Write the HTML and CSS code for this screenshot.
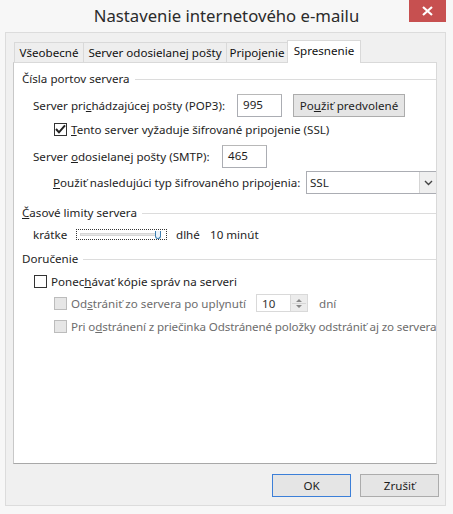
FILE: index.html
```html
<!DOCTYPE html>
<html lang="sk">
<head>
  <meta charset="UTF-8">
  <title>Nastavenie internetového e-mailu</title>
  <link rel="stylesheet" href="styles.css">
</head>
<body>
  <div class="window">
    <!-- Title bar -->
    <div class="titlebar">
      <span class="title">Nastavenie internetového e-mailu</span>
      <div class="close">
        <svg width="11" height="10" viewBox="0 0 11 10"><path d="M1 1 L10 9 M10 1 L1 9" stroke="#fff" stroke-width="2.2"/></svg>
      </div>
    </div>

    <div class="dialog">
      <!-- Tabs -->
      <div class="tabs">
        <div class="tab t1">Všeobecné</div>
        <div class="tab t2">Server odosielanej pošty</div>
        <div class="tab t3">Pripojenie</div>
        <div class="tab t4 active">Spresnenie</div>
      </div>

      <div class="panel">
        <div class="group-head"><span>Čísla portov servera</span><i></i></div>

        <div class="row row-pop">
          <label class="lbl w-pop">Server pri<u>c</u>hádzajúcej pošty (POP3):</label>
          <div class="field w45">995</div>
          <button class="btn btn-default">Po<u>u</u>žiť predvolené</button>
        </div>

        <div class="row row-ssl">
          <span class="check checked">
            <svg width="11" height="10" viewBox="0 0 11 10"><path d="M1 5 L4 8.3 L10 1.3" fill="none" stroke="#222" stroke-width="2"/></svg>
          </span>
          <span class="lbl"><u>T</u>ento server vyžaduje šifrované pripojenie (SSL)</span>
        </div>

        <div class="row row-smtp">
          <label class="lbl w-smtp">Server <u>o</u>dosielanej pošty (SMTP):</label>
          <div class="field w45">465</div>
        </div>

        <div class="row row-enc">
          <label class="lbl w-enc"><u>P</u>oužiť nasledujúci typ šifrovaného pripojenia:</label>
          <div class="select">
            <span class="select-val">SSL</span>
            <span class="select-arrow">
              <svg width="9" height="6" viewBox="0 0 9 6"><path d="M1 1 L4.5 4.5 L8 1" fill="none" stroke="#444" stroke-width="1.4"/></svg>
            </span>
          </div>
        </div>

        <div class="group-head gh-time"><span><u>Č</u>asové limity servera</span><i></i></div>

        <div class="row row-slider">
          <span class="lbl w-short">krátke</span>
          <div class="slider">
            <div class="track"></div>
            <div class="thumb"></div>
          </div>
          <span class="lbl w-long">dlhé</span>
          <span class="lbl">10 minút</span>
        </div>

        <div class="group-head gh-deliv"><span>Doručenie</span><i></i></div>

        <div class="row row-keep">
          <span class="check"></span>
          <span class="lbl">Ponec<u>h</u>ávať kópie správ na serveri</span>
        </div>

        <div class="row row-remove">
          <span class="check disabled"></span>
          <span class="lbl dim w-remove">Od<u>s</u>trániť zo servera po uplynutí</span>
          <div class="spin">
            <span class="spin-val">10</span>
            <span class="spin-btns">
              <svg width="14" height="15" viewBox="0 0 14 15"><path d="M4 6 L7 3 L10 6 Z M4 9 L7 12 L10 9 Z" fill="#888"/><path d="M0 7.5 H14" stroke="#d6d6d6"/></svg>
            </span>
          </div>
          <span class="lbl dim days">dní</span>
        </div>

        <div class="row row-deleted">
          <span class="check disabled"></span>
          <span class="lbl dim tight">Pri o<u>d</u>stránení z priečinka Odstránené položky odstrániť aj zo servera</span>
        </div>
      </div>

      <!-- Dialog buttons -->
      <div class="actions">
        <button class="btn btn-ok">OK</button>
        <button class="btn btn-cancel">Zrušiť</button>
      </div>
    </div>
  </div>
</body>
</html>
```

FILE: styles.css
```css
body {
  margin: 0;
  padding: 0;
  font-family: "Noto Sans", "Open Sans", sans-serif;
  font-size: 11.6px;
  color: #1e1e1e;
  background-color: #f7f7f7;
}
.window {
  width: 453px;
  height: 514px;
  position: relative;
  background-color: #f7f7f7;
  overflow: hidden;
}
.titlebar {
  height: 32px;
  display: flex;
  justify-content: center;
  align-items: center;
}
.title {
  font-size: 16.7px;
  color: #2b2b2b;
  margin-left: 0;
  margin-top: -1px;
}
.close {
  position: absolute;
  top: 0;
  right: 7px;
  width: 37px;
  height: 22px;
  background-color: #c75050;
  display: flex;
  align-items: center;
  justify-content: center;
}
.dialog {
  margin: 0 7px 6px 5px;
  height: 474px;
  box-sizing: border-box;
  border: 1px solid #dcdcdc;
  background-color: #f0f0f0;
  padding: 7px 8px 0 7px;
}
.tabs {
  display: flex;
  align-items: flex-end;
  height: 22px;
}
.tab {
  height: 20px;
  box-sizing: border-box;
  line-height: 19px;
  text-align: center;
  border: 1px solid #d9d9d9;
  border-bottom: none;
  margin-right: -1px;
  background-color: #eeeeee;
  color: #111;
  white-space: nowrap;
}
.t1 {
  width: 70px;
  margin-left: 1px;
}
.t2 {
  width: 144px;
}
.t3 {
  width: 62px;
}
.tab.active {
  width: 74px;
  height: 23px;
  background-color: #fff;
  position: relative;
  margin-bottom: -1px;
  z-index: 1;
}
.panel {
  height: 402px;
  box-sizing: border-box;
  border: 1px solid #d9d9d9;
  border-bottom-color: #a8a8a8;
  border-left-color: #c8c8c8;
  background-color: #fff;
  padding: 5px 0 0 8px;
  overflow: hidden;
}
.group-head {
  height: 20px;
  display: flex;
  align-items: center;
}
.group-head i {
  flex: 1;
  height: 0;
  border-top: 1px solid #dcdcdc;
  margin-left: 5px;
  margin-top: 2px;
}
.gh-time {
  margin-top: 8px;
}
.gh-deliv {
  margin-top: 4px;
}
.row {
  display: flex;
  align-items: center;
  white-space: nowrap;
}
.lbl {
  flex: none;
}
.dim {
  color: #6d6d6d;
}
.tight {
  letter-spacing: -0.12px;
}
.row-pop {
  margin-top: 6px;
  height: 23px;
  padding-left: 11px;
}
.w-pop {
  width: 204px;
}
.field {
  height: 23px;
  box-sizing: border-box;
  border: 1px solid #abadb3;
  border-top-color: #b8b8b8;
  padding: 0 5px;
  line-height: 20px;
  background: #fff;
  flex: none;
}
.w45 {
  width: 45px;
}
.btn {
  font-family: inherit;
  font-size: 11.6px;
  color: #1e1e1e;
  height: 23px;
  box-sizing: border-box;
  border: 1px solid #acacac;
  background-color: #e5e5e5;
  padding: 0;
  flex: none;
}
.btn-default {
  width: 112px;
  margin-left: 11px;
}
.row-ssl {
  margin-top: 2px;
  height: 20px;
  padding-left: 32px;
}
.check {
  flex: none;
  width: 13px;
  height: 13px;
  box-sizing: border-box;
  border: 1px solid #333;
  background: #fff;
  margin-right: 4px;
  display: flex;
  align-items: center;
  justify-content: center;
}
.check.disabled {
  border-color: #bcbcbc;
  background: #e6e6e6;
}
.row-smtp {
  margin-top: 6px;
  height: 23px;
  padding-left: 11px;
}
.w-smtp {
  width: 189px;
}
.row-enc {
  margin-top: 3px;
  height: 23px;
  padding-left: 31px;
}
.w-enc {
  width: 253px;
}
.select {
  width: 132px;
  height: 23px;
  box-sizing: border-box;
  border: 1px solid #abadb3;
  background: #fff;
  display: flex;
  align-items: center;
  flex: none;
}
.select-val {
  flex: 1;
  padding-left: 3px;
}
.select-arrow {
  width: 17px;
  height: 21px;
  border-left: 1px solid #d5d5d5;
  background: #efefef;
  display: flex;
  align-items: center;
  justify-content: center;
}
.row-slider {
  margin-top: 2px;
  height: 20px;
  padding-left: 11px;
}
.w-short {
  width: 43px;
}
.slider {
  flex: none;
  width: 91px;
  height: 11px;
  box-sizing: border-box;
  border: 1px dotted #333;
  position: relative;
  margin-right: 9px;
}
.track {
  position: absolute;
  left: 3px;
  right: 6px;
  top: 3px;
  height: 3px;
  background: #e7e7e7;
  border: 1px solid #d6d6d6;
  box-sizing: border-box;
}
.thumb {
  position: absolute;
  right: 5px;
  top: 1px;
  width: 6px;
  height: 8px;
  box-sizing: border-box;
  border: 1px solid #3c7fb1;
  border-top: none;
  border-radius: 0 0 3px 3px;
  background: #eaf3fb;
}
.w-long {
  width: 34px;
}
.row-keep {
  margin-top: 3px;
  height: 20px;
  padding-left: 12px;
}
.row-remove {
  margin-top: 2px;
  height: 20px;
  padding-left: 32px;
}
.w-remove {
  width: 185px;
}
.spin {
  width: 52px;
  height: 18px;
  box-sizing: border-box;
  border: 1px solid #d9d9d9;
  background: #fff;
  display: flex;
  align-items: center;
  flex: none;
}
.spin-val {
  flex: 1;
  padding-left: 5px;
  color: #333;
}
.spin-btns {
  width: 16px;
  height: 16px;
  border-left: 1px solid #d9d9d9;
  background: #ececec;
  display: flex;
  align-items: center;
  justify-content: center;
}
.days {
  margin-left: 11px;
}
.row-deleted {
  margin-top: 3px;
  height: 20px;
  padding-left: 32px;
}
.actions {
  display: flex;
  justify-content: flex-end;
  gap: 9px;
  margin-top: 10px;
  margin-right: -2px;
}
.btn-ok,
.btn-cancel {
  width: 79px;
}
.btn-ok {
  border-color: #3c7fd8;
}
```
